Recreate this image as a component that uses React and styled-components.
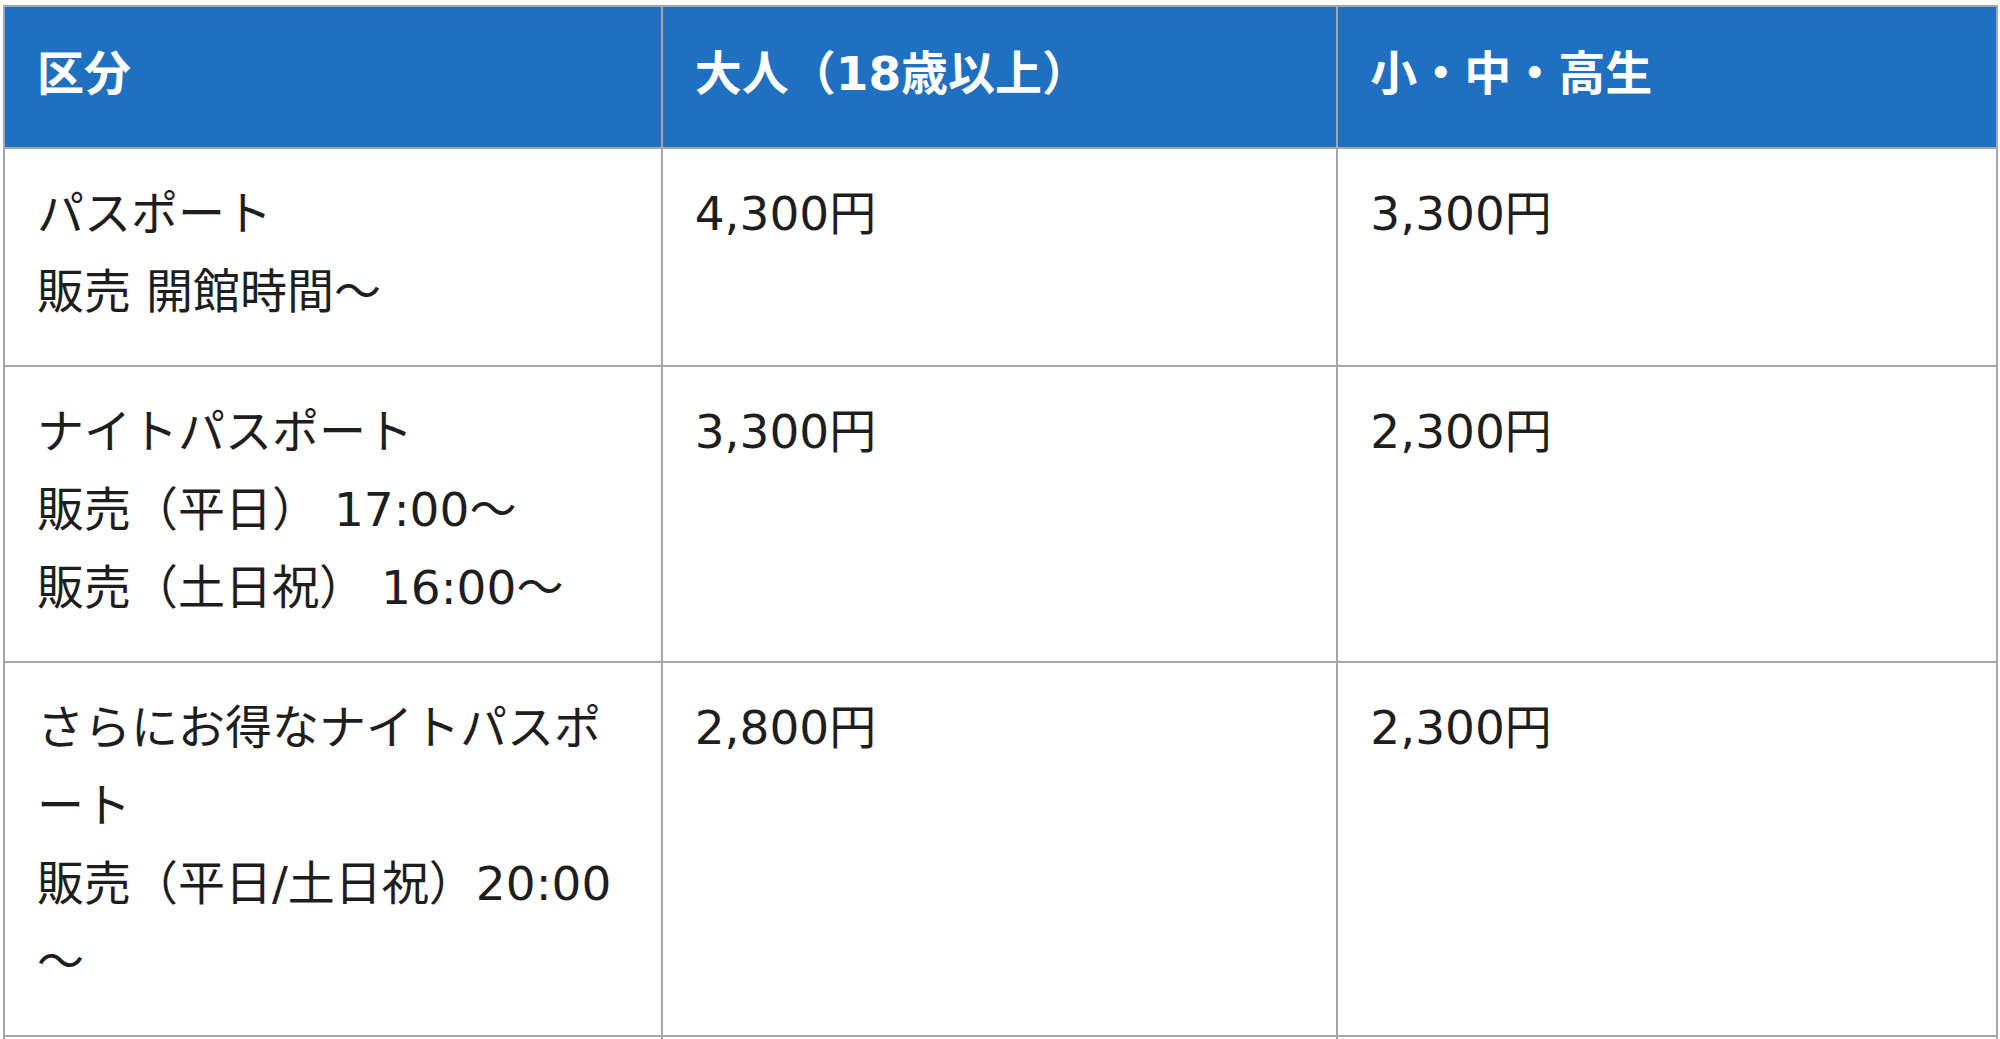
import React from "react";
import styled, { createGlobalStyle } from "styled-components";

const GlobalStyle = createGlobalStyle`
  html, body {
    margin: 0;
    padding: 0;
    background: #ffffff;
  }
  body {
    font-family: "DejaVu Sans", "Noto Sans CJK JP", sans-serif;
  }
`;

const Page = styled.div`
  padding: 5px 2px 0 3px;
  background: #ffffff;
`;

const Table = styled.table`
  width: 100%;
  border-collapse: collapse;
  table-layout: fixed;
  font-family: "DejaVu Sans", "Noto Sans CJK JP", sans-serif;
  font-size: 47px;
  line-height: 78px;
  color: #1e1e1e;
`;

const Col = styled.col`
  width: ${(p) => p.$w};
`;

const HeadCell = styled.th`
  background: #1f70c1;
  color: #ffffff;
  font-weight: 700;
  text-align: left;
  vertical-align: middle;
  padding: 28px 32px 34px;
  border: 2px solid #a3a8ae;
`;

const Cell = styled.td`
  vertical-align: top;
  text-align: left;
  padding: 26px 32px 34px;
  border: 2px solid #a6a6a6;
  height: ${(p) => p.$h || "auto"};
  word-break: break-all;
  line-break: anywhere;
`;

const Line = styled.div`
  display: block;
`;

const rows = [
  {
    label: ["パスポート", "販売 開館時間～"],
    adult: "4,300円",
    child: "3,300円",
  },
  {
    label: ["ナイトパスポート", "販売（平日） 17:00～", "販売（土日祝） 16:00～"],
    adult: "3,300円",
    child: "2,300円",
  },
  {
    label: ["さらにお得なナイトパスポート", "販売（平日/土日祝）20:00～"],
    adult: "2,800円",
    child: "2,300円",
  },
];

export default function App() {
  return (
    <>
      <GlobalStyle />
      <Page>
        <Table>
          <colgroup>
            <Col $w="33%" />
            <Col $w="33.9%" />
            <Col $w="33.1%" />
          </colgroup>
          <thead>
            <tr>
              <HeadCell>区分</HeadCell>
              <HeadCell>大人（18歳以上）</HeadCell>
              <HeadCell>小・中・高生</HeadCell>
            </tr>
          </thead>
          <tbody>
            {rows.map((r, i) => (
              <tr key={i}>
                <Cell>
                  {r.label.map((l, j) => (
                    <Line key={j}>{l}</Line>
                  ))}
                </Cell>
                <Cell>{r.adult}</Cell>
                <Cell>{r.child}</Cell>
              </tr>
            ))}
            <tr>
              <Cell $h="120px" />
              <Cell $h="120px" />
              <Cell $h="120px" />
            </tr>
          </tbody>
        </Table>
      </Page>
    </>
  );
}
